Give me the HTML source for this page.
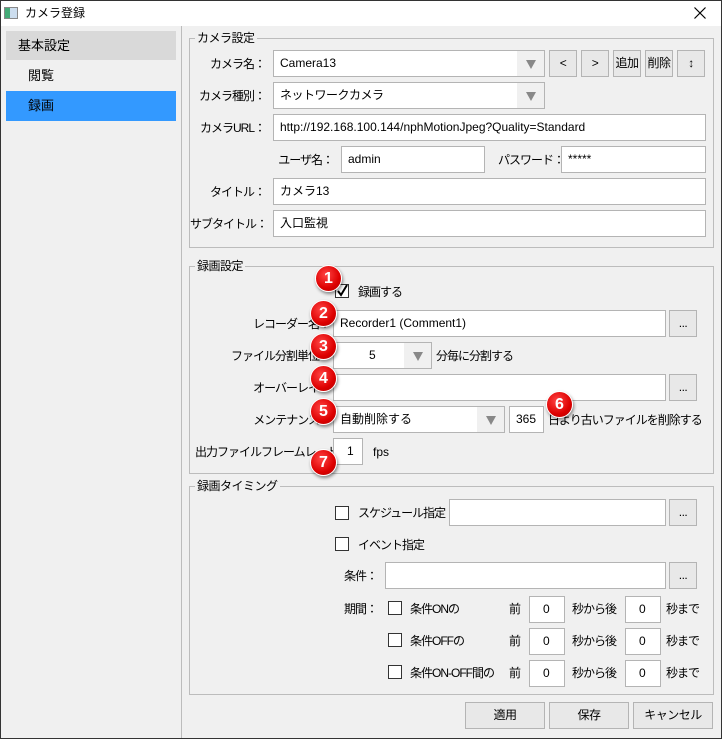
<!DOCTYPE html>
<html><head><meta charset="utf-8"><style>
*{box-sizing:border-box;margin:0;padding:0}
body{width:722px;height:739px;background:#f0f0f0;font-family:"Liberation Sans","Noto Sans CJK JP",sans-serif;font-size:12px;color:#000;position:relative;overflow:hidden}
.a{position:absolute}
.win{position:absolute;left:0;top:0;width:722px;height:739px;border:1px solid #333}
.inp{position:absolute;background:#fff;border:1px solid #b4b4b4;height:27px;line-height:25px;padding-left:6px;white-space:nowrap}
.btn{position:absolute;background:#e8e8e8;border:1px solid #b4b4b4;height:27px;line-height:25px;text-align:center;letter-spacing:-0.5px}
.grp{position:absolute;border:1px solid #bcbcbc}
.gt{position:absolute;background:#f0f0f0;padding:0 2px;line-height:14px;letter-spacing:-0.5px}
.lb{position:absolute;line-height:14px;white-space:nowrap;letter-spacing:-1px}
.r{text-align:right}
.arr{position:absolute;top:0;right:0;width:27px;height:25px;background:#f0f0f0}
.arr:after{content:"";position:absolute;left:9px;top:9px;border-left:5px solid transparent;border-right:5px solid transparent;border-top:9px solid #888}
.cb{position:absolute;width:14px;height:14px;border:1px solid #333;background:#fff}
.bd{position:absolute;width:27px;height:27px;border-radius:50%;background:radial-gradient(circle at 40% 35%,#f44 0%,#d00 60%,#a00 100%);color:#fff;font-weight:bold;font-size:16px;text-align:center;line-height:25px;box-shadow:1px 2px 3px rgba(0,0,0,.45);border:1px solid #fff}
</style></head><body>
<div class="a" style="left:0;top:0;width:722px;height:26px;background:#fff"></div>
<div class="a" style="left:4px;top:7px;width:14px;height:12px;border:1px solid #888;background:linear-gradient(90deg,#4a7 0,#4a7 40%,#cde 40%)"></div>
<div class="lb" style="left:25px;top:6px;letter-spacing:0">カメラ登録</div>
<svg class="a" style="left:694px;top:7px" width="12" height="12"><path d="M0.5 0.5L11.5 11.5M11.5 0.5L0.5 11.5" stroke="#000" stroke-width="1.2"/></svg>
<div class="a" style="left:6px;top:31px;width:170px;height:29px;background:#d9d9d9"></div>
<div class="lb" style="left:18px;top:39px;font-size:13px;letter-spacing:0">基本設定</div>
<div class="lb" style="left:28px;top:69px;font-size:13px;letter-spacing:0">閲覧</div>
<div class="a" style="left:6px;top:91px;width:170px;height:30px;background:#3399ff"></div>
<div class="lb" style="left:28px;top:99px;font-size:13px;letter-spacing:0">録画</div>
<div class="a" style="left:181px;top:26px;width:1px;height:713px;background:#bcbcbc"></div>

<div class="grp" style="left:189px;top:38px;width:525px;height:210px"></div>
<div class="gt" style="left:195px;top:31px">カメラ設定</div>
<div class="lb r" style="left:190px;top:57px;width:75px">カメラ名：</div>
<div class="inp" style="left:273px;top:50px;width:272px">Camera13<div class="arr"></div></div>
<div class="btn" style="left:549px;top:50px;width:28px">&lt;</div>
<div class="btn" style="left:581px;top:50px;width:28px">&gt;</div>
<div class="btn" style="left:613px;top:50px;width:28px">追加</div>
<div class="btn" style="left:645px;top:50px;width:28px">削除</div>
<div class="btn" style="left:677px;top:50px;width:28px">↕</div>
<div class="lb r" style="left:190px;top:89px;width:75px">カメラ種別：</div>
<div class="inp" style="left:273px;top:82px;width:272px;letter-spacing:-0.5px">ネットワークカメラ<div class="arr"></div></div>
<div class="lb r" style="left:190px;top:121px;width:75px">カメラURL：</div>
<div class="inp" style="left:273px;top:114px;width:433px">http://192.168.100.144/nphMotionJpeg?Quality=Standard</div>
<div class="lb r" style="left:258px;top:153px;width:75px">ユーザ名：</div>
<div class="inp" style="left:341px;top:146px;width:144px">admin</div>
<div class="lb" style="left:498px;top:153px">パスワード：</div>
<div class="inp" style="left:561px;top:146px;width:145px">*****</div>
<div class="lb r" style="left:190px;top:185px;width:75px">タイトル：</div>
<div class="inp" style="left:273px;top:178px;width:433px">カメラ13</div>
<div class="lb r" style="left:190px;top:217px;width:75px">サブタイトル：</div>
<div class="inp" style="left:273px;top:210px;width:433px">入口監視</div>

<div class="grp" style="left:189px;top:266px;width:525px;height:208px"></div>
<div class="gt" style="left:195px;top:259px">録画設定</div>
<div class="cb" style="left:335px;top:284px"></div>
<svg class="a" style="left:336px;top:284px" width="13" height="13"><path d="M2 7L5 11L11 1" stroke="#000" stroke-width="2" fill="none"/></svg>
<div class="lb" style="left:358px;top:285px">録画する</div>
<div class="lb r" style="left:190px;top:317px;width:140px">レコーダー名：</div>
<div class="inp" style="left:333px;top:310px;width:333px">Recorder1 (Comment1)</div>
<div class="btn" style="left:669px;top:310px;width:28px">...</div>
<div class="lb r" style="left:190px;top:349px;width:140px">ファイル分割単位：</div>
<div class="inp" style="left:333px;top:342px;width:99px;padding-left:35px">5<div class="arr"></div></div>
<div class="lb" style="left:436px;top:349px">分毎に分割する</div>
<div class="lb r" style="left:190px;top:381px;width:140px">オーバーレイ：</div>
<div class="inp" style="left:333px;top:374px;width:333px"></div>
<div class="btn" style="left:669px;top:374px;width:28px">...</div>
<div class="lb r" style="left:190px;top:413px;width:140px">メンテナンス：</div>
<div class="inp" style="left:333px;top:406px;width:172px">自動削除する<div class="arr"></div></div>
<div class="inp" style="left:509px;top:406px;width:35px;padding-left:6px">365</div>
<div class="lb" style="left:548px;top:413px">日より古いファイルを削除する</div>
<div class="lb" style="left:195px;top:445px">出力ファイルフレームレート：</div>
<div class="inp" style="left:333px;top:438px;width:30px;padding-left:13px">1</div>
<div class="lb" style="left:373px;top:445px;letter-spacing:0">fps</div>

<div class="grp" style="left:189px;top:486px;width:525px;height:209px"></div>
<div class="gt" style="left:195px;top:479px">録画タイミング</div>
<div class="cb" style="left:335px;top:506px"></div>
<div class="lb" style="left:358px;top:506px">スケジュール指定：</div>
<div class="inp" style="left:449px;top:499px;width:217px"></div>
<div class="btn" style="left:669px;top:499px;width:28px">...</div>
<div class="cb" style="left:335px;top:537px"></div>
<div class="lb" style="left:358px;top:538px">イベント指定</div>
<div class="lb" style="left:344px;top:569px">条件：</div>
<div class="inp" style="left:385px;top:562px;width:281px"></div>
<div class="btn" style="left:669px;top:562px;width:28px">...</div>
<div class="lb" style="left:344px;top:602px">期間：</div>
<div class="cb" style="left:388px;top:601px"></div><div class="lb" style="left:410px;top:602px">条件ONの</div>
<div class="cb" style="left:388px;top:633px"></div><div class="lb" style="left:410px;top:634px">条件OFFの</div>
<div class="cb" style="left:388px;top:665px"></div><div class="lb" style="left:410px;top:666px">条件ON-OFF間の</div>
<div class="lb" style="left:509px;top:602px">前</div><div class="inp" style="left:529px;top:596px;width:36px;padding-left:13px">0</div><div class="lb" style="left:572px;top:602px">秒から後</div><div class="inp" style="left:625px;top:596px;width:36px;padding-left:13px">0</div><div class="lb" style="left:666px;top:602px">秒まで</div>
<div class="lb" style="left:509px;top:634px">前</div><div class="inp" style="left:529px;top:628px;width:36px;padding-left:13px">0</div><div class="lb" style="left:572px;top:634px">秒から後</div><div class="inp" style="left:625px;top:628px;width:36px;padding-left:13px">0</div><div class="lb" style="left:666px;top:634px">秒まで</div>
<div class="lb" style="left:509px;top:666px">前</div><div class="inp" style="left:529px;top:660px;width:36px;padding-left:13px">0</div><div class="lb" style="left:572px;top:666px">秒から後</div><div class="inp" style="left:625px;top:660px;width:36px;padding-left:13px">0</div><div class="lb" style="left:666px;top:666px">秒まで</div>

<div class="btn" style="left:465px;top:702px;width:80px">適用</div>
<div class="btn" style="left:549px;top:702px;width:80px">保存</div>
<div class="btn" style="left:633px;top:702px;width:80px">キャンセル</div>

<div class="bd" style="left:315px;top:265px">1</div>
<div class="bd" style="left:310px;top:300px">2</div>
<div class="bd" style="left:310px;top:333px">3</div>
<div class="bd" style="left:310px;top:365px">4</div>
<div class="bd" style="left:310px;top:398px">5</div>
<div class="bd" style="left:546px;top:391px">6</div>
<div class="bd" style="left:310px;top:449px">7</div>
<div class="win"></div>
</body></html>
